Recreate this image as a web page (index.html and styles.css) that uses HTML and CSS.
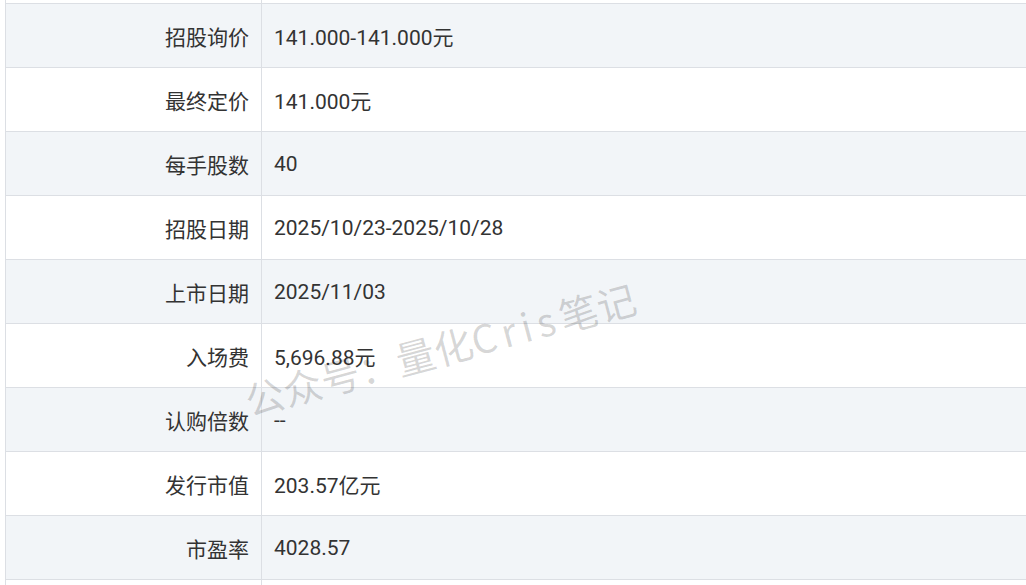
FILE: index.html
```html
<!DOCTYPE html>
<html lang="zh-CN">
<head>
<meta charset="utf-8">
<title>新股信息</title>
<link rel="stylesheet" href="styles.css">
</head>
<body>
<div class="page">
  <div class="info">
    <div class="row row-cut"><div class="label"></div><div class="value"></div></div>
    <div class="row alt"><div class="label">招股询价</div><div class="value">141.000-141.000元</div></div>
    <div class="row"><div class="label">最终定价</div><div class="value">141.000元</div></div>
    <div class="row alt"><div class="label">每手股数</div><div class="value">40</div></div>
    <div class="row"><div class="label">招股日期</div><div class="value">2025/10/23-2025/10/28</div></div>
    <div class="row alt"><div class="label">上市日期</div><div class="value">2025/11/03</div></div>
    <div class="row"><div class="label">入场费</div><div class="value">5,696.88元</div></div>
    <div class="row alt"><div class="label">认购倍数</div><div class="value">--</div></div>
    <div class="row"><div class="label">发行市值</div><div class="value">203.57亿元</div></div>
    <div class="row alt"><div class="label">市盈率</div><div class="value">4028.57</div></div>
    <div class="row"><div class="label"></div><div class="value"></div></div>
  </div>
  <div class="watermark">公众号：量化<span class="latin">Cris</span>笔记</div>
</div>
</body>
</html>
```
FILE: styles.css
```css
html, body {
  margin: 0;
  padding: 0;
  background: #ffffff;
  overflow: hidden;
}
.page {
  position: relative;
  width: 1026px;
  height: 585px;
  overflow: hidden;
  font-family: "Roboto", "Noto Sans CJK SC", sans-serif;
  font-size: 21px;
  color: #333333;
}
.info {
  margin-left: 5px;
  width: 1040px;
  border-left: 1px solid #dcdfe4;
}
.row {
  display: grid;
  grid-template-columns: 256px 1fr;
  height: 64px;
  box-sizing: border-box;
  border-bottom: 1px solid #dcdfe4;
  background: #ffffff;
}
.row.alt {
  background: #f2f5f8;
}
.row.row-cut {
  height: 4px;
}
.label {
  display: flex;
  align-items: center;
  justify-content: flex-end;
  padding-right: 12px;
  border-right: 1px solid #dcdfe4;
  font-family: "Noto Sans CJK SC", sans-serif;
}
.value {
  display: flex;
  align-items: center;
  padding-left: 12px;
}
.watermark {
  position: absolute;
  left: 440px;
  top: 348px;
  transform: translate(-50%, -50%) rotate(-15deg);
  font-family: "Noto Sans CJK SC", sans-serif;
  font-size: 39px;
  color: rgba(0, 0, 0, 0.16);
  white-space: nowrap;
  pointer-events: none;
}
.watermark .latin {
  letter-spacing: 0.14em;
}
```
